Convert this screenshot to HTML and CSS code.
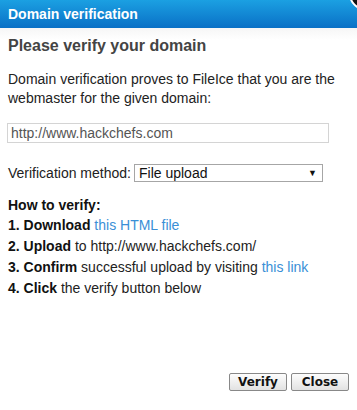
FILE: index.html
```html
<!DOCTYPE html>
<html>
<head>
<meta charset="utf-8">
<link rel="stylesheet" href="styles.css">
</head>
<body>
<div class="dialog">
  <div class="titlebar">
    <span class="title">Domain verification</span>
    <span class="closer"></span>
  </div>
  <div class="content">
    <h2 class="heading">Please verify your domain</h2>
    <p class="intro">Domain verification proves to FileIce that you are the webmaster for the given domain:</p>
    <div class="field">http://www.hackchefs.com</div>
    <div class="method">
      <span class="label">Verification method:</span>
      <div class="select"><span>File upload</span><span class="arrow">▼</span></div>
    </div>
    <div class="howto">
      <div class="howto-title">How to verify:</div>
      <div class="step"><b>1. Download</b> <a class="link">this HTML file</a></div>
      <div class="step"><b>2. Upload</b> to http://www.hackchefs.com/</div>
      <div class="step"><b>3. Confirm</b> successful upload by visiting <a class="link">this link</a></div>
      <div class="step"><b>4. Click</b> the verify button below</div>
    </div>
  </div>
  <div class="buttons">
    <button class="btn">Verify</button>
    <button class="btn">Close</button>
  </div>
</div>
</body>
</html>
```
FILE: styles.css
```css
html, body {
  margin: 0;
  padding: 0;
  background: #ffffff;
  width: 357px;
  height: 410px;
  overflow: hidden;
}
body {
  font-family: "Liberation Sans", Arial, sans-serif;
  font-size: 14px;
  color: #222;
}
.dialog {
  position: relative;
  width: 357px;
  height: 410px;
  display: flex;
  flex-direction: column;
}
.titlebar {
  height: 28px;
  background: linear-gradient(#1ba0e2, #0a70c6);
  display: flex;
  align-items: center;
  padding-left: 8px;
  position: relative;
  overflow: hidden;
}
.title {
  color: #fff;
  font-weight: bold;
  font-size: 14px;
  margin-top: 0;
}
.closer {
  position: absolute;
  right: -24px;
  top: -22px;
  width: 28px;
  height: 28px;
  border-radius: 50%;
  background: #111;
  border: 2px solid #fff;
}
.content {
  flex: 1;
  padding: 0 8px;
  background: linear-gradient(#f6f6f6, #ffffff 12px);
}
.heading {
  margin: 8px 0 0;
  font-size: 16px;
  font-weight: bold;
  color: #444;
  line-height: 19px;
}
.intro {
  margin: 15px 0 0;
  line-height: 19px;
  color: #222;
}
.field {
  margin: 15px 0 0 -1px;
  width: 317px;
  height: 18px;
  border: 1px solid #d4d4d4;
  color: #555;
  line-height: 18px;
  padding-left: 3px;
  box-sizing: content-box;
}
.method {
  display: flex;
  align-items: center;
  margin-top: 21px;
}
.label {
  color: #222;
}
.select {
  margin-left: 3px;
  width: 178px;
  height: 16px;
  border: 1px solid #a6a6a6;
  display: flex;
  align-items: center;
  justify-content: space-between;
  padding: 0 5px 0 4px;
  box-sizing: content-box;
  color: #111;
}
.arrow {
  font-size: 9px;
}
.howto {
  margin-top: 13px;
}
.howto-title {
  font-weight: bold;
  line-height: 20px;
  color: #111;
}
.step {
  line-height: 21px;
  color: #222;
}
.step:first-of-type {
  margin-top: 1px;
}
.step b {
  color: #111;
}
.link {
  color: #3a8fd6;
  text-decoration: none;
}
.buttons {
  display: flex;
  justify-content: flex-end;
  gap: 4px;
  padding: 0 8px 19px 0;
}
.btn {
  width: 58px;
  height: 18px;
  padding: 0;
  font-family: "DejaVu Sans", Verdana, sans-serif;
  font-weight: bold;
  font-size: 12px;
  color: #111;
  background: linear-gradient(#fdfdfd, #e2e2e2);
  border: 1px solid #888;
  border-radius: 2px;
  line-height: 16px;
}
```
